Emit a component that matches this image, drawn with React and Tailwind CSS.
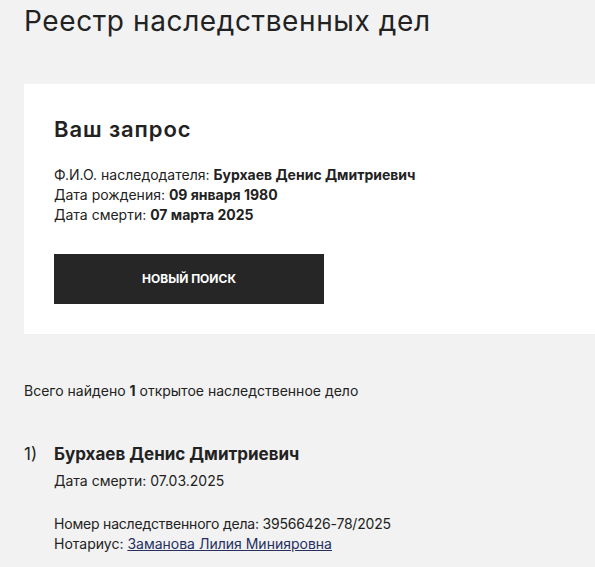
export default function App() {
  return (
    <div
      className="min-h-screen bg-[#f2f2f2] pl-[24px] text-[#222222]"
      style={{ fontFamily: 'Inter, "Liberation Sans", Arial, sans-serif' }}
    >
      <h1 className="pt-[4px] text-[28px] leading-[34px] font-normal tracking-[0.6px]">Реестр наследственных дел</h1>

      <div className="mt-[46px] bg-white pl-[30px] pt-[32px] pb-[30px]">
        <h2 className="text-[22px] leading-[26px] font-semibold tracking-[0.9px]">Ваш запрос</h2>
        <div className="mt-[23px] text-[14px] leading-[20px]">
          <div>
            Ф.И.О. наследодателя: <span className="font-bold">Бурхаев Денис Дмитриевич</span>
          </div>
          <div>
            Дата рождения: <span className="font-bold">09 января 1980</span>
          </div>
          <div>
            Дата смерти: <span className="font-bold">07 марта 2025</span>
          </div>
        </div>
        <button className="mt-[29px] flex h-[50px] w-[270px] items-center justify-center bg-[#262626] text-[12px] font-bold text-white uppercase">
          Новый поиск
        </button>
      </div>

      <div className="mt-[47px] text-[14px] leading-[20px]">
        Всего найдено <span className="font-bold">1</span> открытое наследственное дело
      </div>

      <div className="mt-[42px] flex">
        <div className="w-[30px] text-[17px] leading-[22px]">1)</div>
        <div>
          <div className="text-[17px] leading-[22px] font-bold">Бурхаев Денис Дмитриевич</div>
          <div className="mt-[6px] text-[14px] leading-[20px]">Дата смерти: 07.03.2025</div>
          <div className="mt-[23px] text-[14px] leading-[20px]">
            <div className="tracking-[-0.2px]">Номер наследственного дела: 39566426-78/2025</div>
            <div>
              Нотариус:{" "}
              <a href="#" className="text-[#26305f] underline">
                Заманова Лилия Минияровна
              </a>
            </div>
          </div>
        </div>
      </div>
    </div>
  );
}
